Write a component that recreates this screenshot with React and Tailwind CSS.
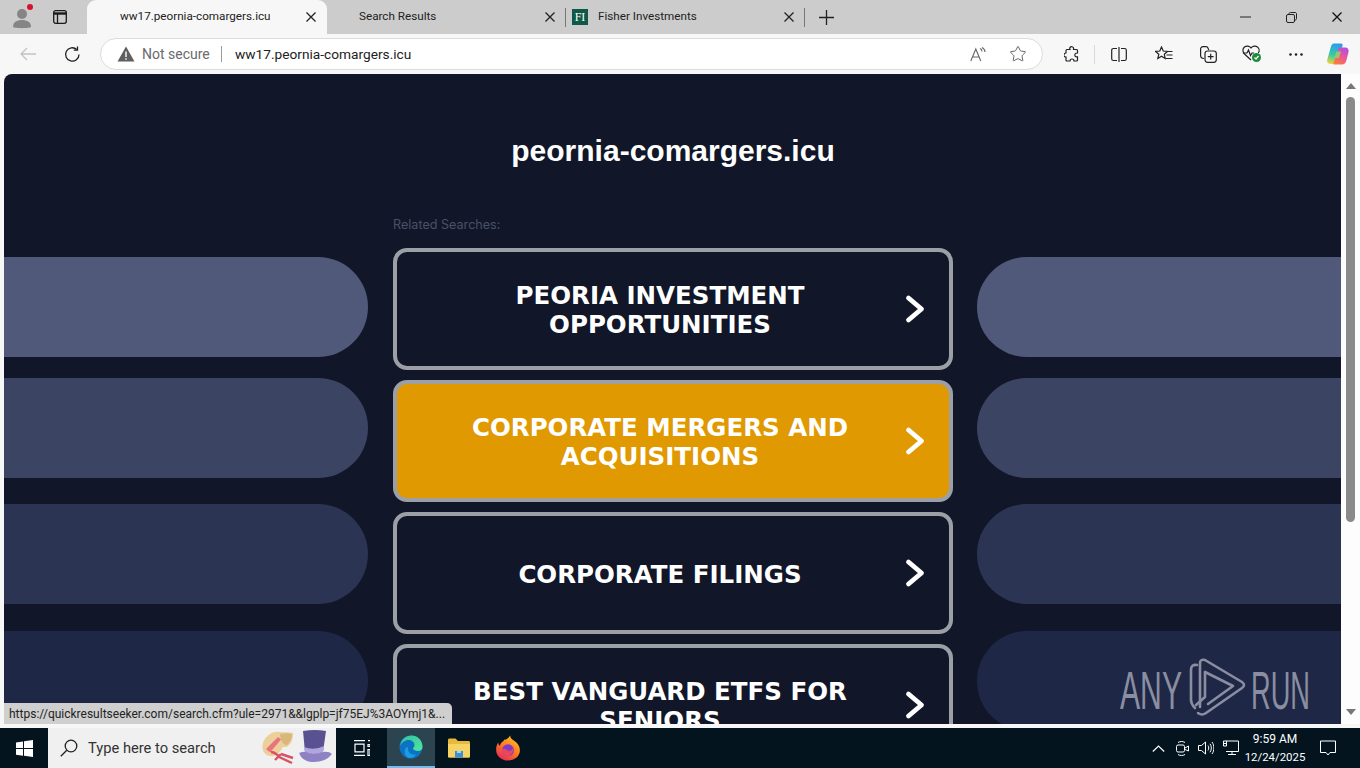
import { Star } from 'lucide-react';

const uiFont = "font-['Roboto','Noto_Sans',sans-serif]";

const buttons = [
  { label: 'PEORIA INVESTMENT OPPORTUNITIES', active: false },
  { label: 'CORPORATE MERGERS AND ACQUISITIONS', active: true },
  { label: 'CORPORATE FILINGS', active: false },
  { label: 'BEST VANGUARD ETFS FOR SENIORS', active: false },
];

function CloseIcon({ size = 12, color = '#222' }) {
  return (
    <svg width={size} height={size} viewBox="0 0 12 12" fill="none" stroke={color} strokeWidth="1.3">
      <path d="M1.5 1.5l9 9M10.5 1.5l-9 9" />
    </svg>
  );
}

function Tab({ title, active, favicon, width, textPad }) {
  return (
    <div
      className={
        active
          ? 'flex items-center h-[34px] bg-[#f7f7f7] rounded-t-[9px] shrink-0'
          : 'flex items-center h-[34px] shrink-0'
      }
      style={{ width }}
    >
      {favicon}
      <span className="text-[11.700px] text-[#222] whitespace-nowrap" style={{ marginLeft: textPad }}>
        {title}
      </span>
      <span className={active ? 'ml-auto mr-[10px] flex' : 'ml-auto mr-[9px] flex'}>
        <CloseIcon />
      </span>
    </div>
  );
}

function ChevronBtn() {
  return (
    <svg width="24" height="32" viewBox="0 0 24 32" fill="none" stroke="#fff" strokeWidth="4.8" strokeLinecap="round" strokeLinejoin="round" className="shrink-0">
      <path d="M5.500 5l13 11-13 11" />
    </svg>
  );
}

function SideColumn({ side }) {
  const shape = side === 'left' ? 'rounded-r-[50px]' : 'rounded-l-[50px] -ml-px';
  return (
    <div className="flex flex-col pt-[183px]">
      <div className={`h-[100px] bg-[#50597a] ${shape}`} />
      <div className={`h-[100px] mt-[21px] bg-[#3c4463] ${shape}`} />
      <div className={`h-[100px] mt-[26px] bg-[#2c3453] ${shape}`} />
      <div className={`h-[100px] mt-[27px] bg-[#1f2747] ${shape}`} />
    </div>
  );
}

function CopilotIcon() {
  return (
    <svg width="24" height="24" viewBox="0 0 24 24">
      <defs>
        <linearGradient id="cpa" x1="0.5" y1="0" x2="0.3" y2="1">
          <stop offset="0" stopColor="#2a9df0" />
          <stop offset="0.55" stopColor="#35c9a5" />
          <stop offset="1" stopColor="#f4d23c" />
        </linearGradient>
        <linearGradient id="cpb" x1="0.8" y1="0" x2="0.2" y2="1">
          <stop offset="0" stopColor="#b04de6" />
          <stop offset="0.55" stopColor="#ef5a8e" />
          <stop offset="1" stopColor="#f9822e" />
        </linearGradient>
      </defs>
      <path d="M8 1.500h7c1.500 0 2 1 1.500 2.200L11 20c-.5 1.400-1.400 2-2.800 2H4.500C2 22 .6 20 1.300 17.600L4.500 6c.7-3 1.800-4.500 3.500-4.500z" fill="url(#cpa)" />
      <path d="M13.500 5.500h5.500c2.800 0 4 2 3.500 4.500L20.500 18c-.6 2.500-2 4.500-4.500 4.500H8.500c-1.200 0-1.300-1-.9-1.800L12 8c.3-1.300.6-2.500 1.500-2.500z" fill="url(#cpb)" />
      <path d="M10.500 9.500h4.500l-2 6.500H8.300z" fill="#8fd86a" opacity="0.8" />
    </svg>
  );
}

function EdgeIcon() {
  return (
    <svg width="24" height="24" viewBox="0 0 24 24">
      <defs>
        <linearGradient id="edgea" x1="0" y1="0" x2="1" y2="1">
          <stop offset="0" stopColor="#35c1a0" />
          <stop offset="1" stopColor="#50e6a0" />
        </linearGradient>
      </defs>
      <circle cx="12" cy="12" r="11.500" fill="#0c72c4" />
      <path d="M1 11C2 4.500 7 .5 12.500.5 18.500.5 23.500 5 23.500 12c0 2.500-2 4-4.500 4-2.500 0-5-1-5-2.500 0-1 1.500-1.500 1.500-3.500 0-3-3-5-6-5C6 5 2.500 7.500 1 11z" fill="url(#edgea)" />
      <path d="M9 14c0 3.500 3.500 6.500 8 5.500-1.500 2.500-4 4-6.500 3.500C6.500 22.500 5 18 6 14.500 6.800 12 9 10.500 9 14z" fill="#1b9de2" />
    </svg>
  );
}

function FolderIcon() {
  return (
    <svg width="24" height="22" viewBox="0 0 24 22">
      <path d="M1 3c0-1 .6-1.600 1.500-1.600h6L11 4h10.500c1 0 1.500.6 1.500 1.500V19c0 1-.6 1.600-1.500 1.600h-19C1.600 20.600 1 20 1 19z" fill="#e8b93a" />
      <path d="M1 7h22v12c0 1-.6 1.600-1.500 1.600h-19C1.600 20.600 1 20 1 19z" fill="#f6d365" />
      <rect x="8" y="14" width="8" height="6.600" fill="#3d8fd1" />
      <rect x="10" y="14" width="4" height="2" fill="#a6d3f2" />
    </svg>
  );
}

function FirefoxIcon() {
  return (
    <svg width="26" height="26" viewBox="0 0 24 24">
      <defs>
        <linearGradient id="ffa" x1="0.8" y1="0" x2="0.2" y2="1">
          <stop offset="0" stopColor="#ffc329" />
          <stop offset="0.5" stopColor="#ff7a1f" />
          <stop offset="1" stopColor="#e6245e" />
        </linearGradient>
      </defs>
      <path d="M14 .5c0 2.500 1.500 3.500 4 5 3 2 5 5 5 8.500 0 5.500-5 9.500-11 9.500S1 19.500 1 13.500c0-3 1-5 2-6.500 0 1.500.5 2.500 1.500 3C5 7 8 6 9 4c.7 1 3-.5 5-3.500z" fill="url(#ffa)" />
      <circle cx="12" cy="14" r="5.500" fill="#7b3bc9" />
      <path d="M6.500 13c2-1 4 0 5 1s4 1 5-2c1 3-1 7.500-5 7.500-3 0-5.500-3-5-6.500z" fill="#e8475f" />
    </svg>
  );
}

function SearchStickers() {
  return (
    <svg width="76" height="36" viewBox="0 0 76 36">
      <path d="M4 13C7 5 14 1 20 2c5 .5 9 0 14 1 0 5-1 10-5 13-2 2-5 0-6 2-2 5-7 9-12 8-6-1-9-7-7-13z" fill="#eccf9a" />
      <path d="M21 4c4-1 8-1 12 0 0 4-2 9-5 11-3 1-7-5-7-11z" fill="#d9b67a" />
      <path d="M7 19l12-12 3 2.500-11 13z" fill="#e8747c" />
      <path d="M12 22c4 0 6 3 9 5M18 26l15 7M22 24l12 4M16 30l6-6" stroke="#d94f63" strokeWidth="2.400" fill="none" />
      <path d="M44 1Q56-1 67 1L64 22Q54 26 46 22Z" fill="#5a5290" />
      <path d="M45 17Q55 21 65 16L64 22Q54 26 46 22Z" fill="#b0a5de" />
      <path d="M40 23Q45 21 47 22 54 26 64 22 70 21 73 24 66 33 52 32 43 31 40 23Z" fill="#8e82c4" />
    </svg>
  );
}

function TaskbarSlot({ width, active, children }) {
  return (
    <div
      className={
        active
          ? 'flex items-center justify-center h-10 bg-[#2c4350] border-b-2 border-[#76b9ed] shrink-0'
          : 'flex items-center justify-center h-10 shrink-0'
      }
      style={{ width }}
    >
      {children}
    </div>
  );
}

function ToolbarIcon({ width, children }) {
  return (
    <div className="flex items-center justify-center shrink-0" style={{ width }}>
      {children}
    </div>
  );
}

export default function App() {
  return (
    <div className={`w-[1360px] h-[768px] flex flex-col overflow-hidden bg-[#f7f7f7] ${uiFont}`}>
      {/* tab strip */}
      <div className="h-[34px] bg-[#cccccc] flex items-center shrink-0">
        <div className="relative w-[44px] pl-[12px] flex items-center shrink-0">
          <svg width="22" height="24" viewBox="0 0 22 24" fill="#858585">
            <circle cx="10" cy="9" r="5" />
            <path d="M1 22c0-5 4-7 9-7s9 2 9 7c-2 1.500-16 1.500-18 0z" />
          </svg>
          <span className="absolute left-[27px] top-[-1px] w-[6px] h-[6px] rounded-full bg-[#d9112a]" />
        </div>
        <div className="w-[43px] flex items-center justify-start pl-[9px] shrink-0">
          <svg width="14" height="14" viewBox="0 0 14 14" fill="none" stroke="#1a1a1a" strokeWidth="1.300">
            <rect x=".7" y=".7" width="12.600" height="12.600" rx="2" />
            <path d="M.7 3.500h12.600" strokeWidth="2.400" />
            <path d="M4.500 3.500v9.800" />
          </svg>
        </div>
        <Tab title="ww17.peornia-comargers.icu" active width={240} textPad={33} />
        <Tab title="Search Results" width={238} textPad={32} />
        <div className="w-px h-[19px] bg-[#777] shrink-0" />
        <Tab
          title="Fisher Investments"
          width={238}
          textPad={10}
          favicon={
            <span className="ml-[6px] w-4 h-4 bg-[#0f5a46] flex items-center justify-center text-white text-[12px] leading-none font-['Liberation_Serif',serif] shrink-0">
              FI
            </span>
          }
        />
        <div className="w-px h-[19px] bg-[#777] shrink-0" />
        <div className="ml-[14px] flex shrink-0">
          <svg width="15" height="15" viewBox="0 0 15 15" stroke="#222" strokeWidth="1.300">
            <path d="M7.500 0v15M0 7.500h15" />
          </svg>
        </div>
        <div className="ml-auto flex items-center shrink-0">
          <div className="w-[46px] flex justify-center">
            <svg width="11" height="2" viewBox="0 0 11 2" stroke="#222"><path d="M0 1h11" /></svg>
          </div>
          <div className="w-[46px] flex justify-center">
            <svg width="11" height="11" viewBox="0 0 11 11" fill="none" stroke="#222">
              <rect x=".5" y="2.500" width="8" height="8" rx="1.500" />
              <path d="M3 2.500V2c0-1 .6-1.500 1.500-1.500H9c1 0 1.500.6 1.500 1.500v4.500c0 1-.5 1.500-1.500 1.500" />
            </svg>
          </div>
          <div className="w-[46px] flex justify-center">
            <CloseIcon size={12} color="#111" />
          </div>
        </div>
      </div>

      {/* toolbar */}
      <div className="h-[40px] bg-[#f7f7f7] flex items-center shrink-0">
        <ToolbarIcon width={56}>
          <svg width="16" height="14" viewBox="0 0 16 14" fill="none" stroke="#c4c4c4" strokeWidth="1.300">
            <path d="M16 7H1M7 1L1 7l6 6" />
          </svg>
        </ToolbarIcon>
        <ToolbarIcon width={32}>
          <svg width="17" height="17" viewBox="0 0 17 17" fill="none" stroke="#222" strokeWidth="1.300">
            <path d="M15 8.500A6.700 6.700 0 1 1 12.800 3.500" />
            <path d="M13.500 .5v3.700H9.800" />
          </svg>
        </ToolbarIcon>
        <div className="ml-[12px] w-[943px] h-[32px] bg-white border border-[#dcdcdc] rounded-full flex items-center shrink-0">
          <svg className="ml-[16px] shrink-0" width="18" height="16" viewBox="0 0 18 16">
            <path d="M9 .5L17.500 15.500H.5z" fill="#5f5f5f" />
            <path d="M9 5.500v5.500M9 12.300v1.500" stroke="#fff" strokeWidth="1.400" />
          </svg>
          <span className="ml-[7px] w-[67px] text-[14px] text-[#6a6a6a] whitespace-nowrap">Not secure</span>
          <span className="ml-[12px] w-px h-[16px] bg-[#9a9a9a]" />
          <span className="ml-[13px] text-[13.700px] text-[#222] whitespace-nowrap">ww17.peornia-comargers.icu</span>
          <div className="ml-auto mr-[15px] flex items-center gap-[23px]">
            <svg width="16" height="15" viewBox="0 0 16 15" fill="none" stroke="#666" strokeWidth="1.100">
              <path d="M.8 14L5.800 2l5 12M2.500 10h6.500" />
              <path d="M10 1.500c1.500.6 2 1.600 2 3M12 .5c1.800 1 3 2.500 3 4.500" />
            </svg>
            <Star size={18} strokeWidth={1.200} color="#555" />
          </div>
        </div>
        <ToolbarIcon width={46} />
        <div className="ml-[-34px] flex items-center shrink-0">
          <ToolbarIcon width={34}>
            <svg width="16" height="16" viewBox="0 0 16 16" fill="none" stroke="#222" strokeWidth="1.200">
              <path d="M6 1.500c1-1.200 3-1 3.500.5.200.6 0 1.200 0 1.500h3c.6 0 1 .4 1 1v2.500c-.4 0-1 0-1.500.2-1.800.8-1.500 3.300.3 3.600h1.200V14c0 .6-.4 1-1 1h-2.500c0-1-.6-2-2-2s-2 1-2 2H3c-.6 0-1-.4-1-1v-3c-1.800 0-2.500-1-2-2.500C.3 7.500 1 7 2 7V4.500c0-.6.400-1 1-1h3c-.3-.6-.4-1.300 0-2z" />
            </svg>
          </ToolbarIcon>
          <span className="ml-[5px] w-px h-[19px] bg-[#d8d8d8]" />
          <ToolbarIcon width={47}>
            <svg width="16" height="15" viewBox="0 0 16 15" fill="none" stroke="#222" strokeWidth="1.200">
              <path d="M8 0v15M6 1.500H2.500c-1 0-1.800.8-1.800 1.800v8.400c0 1 .8 1.800 1.800 1.800H6M10 1.500h3.500c1 0 1.800.8 1.800 1.800v8.400c0 1-.8 1.800-1.800 1.800H10" />
            </svg>
          </ToolbarIcon>
          <ToolbarIcon width={44}>
            <svg width="18" height="16" viewBox="0 0 18 16" fill="none" stroke="#222" strokeWidth="1.200">
              <path d="M6.500 1L8.300 5l4.200.4-3.200 2.900.9 4.200-3.700-2.200L2.800 12.500l1-4.200L.6 5.400 4.800 5z" />
              <path d="M12 5.500h5.500M11.500 9h6M11 12.500h6.500" />
            </svg>
          </ToolbarIcon>
          <ToolbarIcon width={44}>
            <svg width="17" height="17" viewBox="0 0 17 17" fill="none" stroke="#222" strokeWidth="1.200">
              <path d="M4 12.500c-2 0-3.400-1-3.400-3V3c0-1.300 1-2.300 2.300-2.300h3c1 0 2 .8 2.300 1.800L8.800 4" />
              <rect x="5" y="5" width="11.300" height="11.300" rx="2.500" />
              <path d="M10.700 7.800v5.800M7.800 10.700h5.800" />
            </svg>
          </ToolbarIcon>
          <ToolbarIcon width={44}>
            <svg width="20" height="18" viewBox="0 0 20 18" fill="none" stroke="#222" strokeWidth="1.200">
              <path d="M9 15L2.500 9C.3 6.800.5 3.500 2.500 2 4.500.5 7.500.8 9 3c1.500-2.200 4.500-2.500 6.500-1 1.800 1.400 2.200 4 .8 6" />
              <path d="M1.500 8h3.500l1.500-3 2 5.500 1.500-2.500h2" />
              <circle cx="14.500" cy="12.500" r="4.500" fill="#1f8a3a" stroke="none" />
              <path d="M12.500 12.500l1.500 1.500 2.500-3" stroke="#fff" />
            </svg>
          </ToolbarIcon>
          <ToolbarIcon width={44}>
            <svg width="14" height="3" viewBox="0 0 14 3" fill="#222">
              <circle cx="1.500" cy="1.500" r="1.300" />
              <circle cx="7" cy="1.500" r="1.300" />
              <circle cx="12.500" cy="1.500" r="1.300" />
            </svg>
          </ToolbarIcon>
          <ToolbarIcon width={40}>
            <CopilotIcon />
          </ToolbarIcon>
        </div>
      </div>

      {/* page */}
      <div className="relative h-[650px] flex shrink-0 pl-[4px]">
        <div className="w-[1337px] h-full bg-[#111729] rounded-tl-[8px] overflow-hidden grid grid-cols-[364px_560px_1fr] gap-x-[25px] shrink-0">
          <SideColumn side="left" />
          <div className="flex flex-col">
            <h1 className="mt-[56px] h-[42px] text-[30px] leading-[42px] font-bold text-white text-center font-['Liberation_Sans',sans-serif]">
              peornia-comargers.icu
            </h1>
            <p className="mt-[44px] h-[18px] text-[12.600px] leading-[18px] text-[#4a5166] font-['Inter',sans-serif]">
              Related Searches:
            </p>
            <div className="mt-[14px] flex flex-col gap-[10px]">
              {buttons.map((b) => (
                <div
                  key={b.label}
                  className={
                    b.active
                      ? 'h-[122px] shrink-0 flex items-center pl-[20px] pr-[22px] rounded-[14px] border-4 border-[#9ca0a6] bg-[#e09900]'
                      : 'h-[122px] shrink-0 flex items-center pl-[20px] pr-[22px] rounded-[14px] border-4 border-[#9ca0a6]'
                  }
                >
                  <span className="flex-1 pt-[2px] text-center text-white text-[24.500px] leading-[29px] font-bold font-['DejaVu_Sans',sans-serif]">
                    {b.label}
                  </span>
                  <ChevronBtn />
                </div>
              ))}
            </div>
          </div>
          <SideColumn side="right" />
        </div>
        {/* scrollbar */}
        <div className="w-[19px] h-full bg-[#fdfdfd] flex flex-col items-center shrink-0">
          <span className="mt-[9px] w-0 h-0 border-x-[5px] border-x-transparent border-b-[6px] border-b-[#777]" />
          <span className="mt-[8px] w-[9px] h-[425px] rounded-full bg-[#8a8a8a]" />
          <span className="mt-auto mb-[9px] w-0 h-0 border-x-[5px] border-x-transparent border-t-[6px] border-t-[#777]" />
        </div>

        {/* link preview bubble */}
        <div className="absolute left-[4px] bottom-0 w-[448px] h-[21px] pl-[5px] bg-[#cfcfcf] rounded-tr-[5px] flex items-center text-[12px] text-[#222] whitespace-nowrap overflow-hidden">
          https://quickresultseeker.com/search.cfm?ule=2971&amp;&amp;lgplp=jf75EJ%3AOYmj1&amp;...
        </div>

        {/* watermark */}
        <svg className="absolute left-[1118px] bottom-[3px]" width="194" height="64" viewBox="0 0 194 64" fill="none">
          <text x="2" y="52" fontSize="54" fontFamily="Liberation Sans" fill="#8a8ea0" textLength="62" lengthAdjust="spacingAndGlyphs">ANY</text>
          <g stroke="#8a8ea0" strokeWidth="2.600" strokeLinecap="round" strokeLinejoin="round">
            <path d="M79 8Q73 7 73 13V43Q73 47 77 51" />
            <path d="M82 50V6Q82 2 87 3L124 25Q128 28 124 31L88 56Q84 59 80 56" />
            <path d="M87 15V40L78 48" />
            <path d="M87 15L115 29 90 47" />
          </g>
          <text x="133" y="52" fontSize="54" fontFamily="Liberation Sans" fill="#8a8ea0" textLength="59" lengthAdjust="spacingAndGlyphs">RUN</text>
        </svg>
      </div>

      <div className="h-[4px] bg-[#f7f7f7] shrink-0" />

      {/* taskbar */}
      <div className="h-[40px] bg-[#03141f] flex items-center shrink-0">
        <TaskbarSlot width={48}>
          <svg width="17" height="17" viewBox="0 0 17 17" fill="#fff">
            <path d="M0 2.400l7-1v6.700H0zM8 1.300L17 0v8.100H8zM0 9h7v6.700l-7-1zM8 9h9v8l-9-1.300z" />
          </svg>
        </TaskbarSlot>
        <div className="w-[288px] h-10 bg-[#f0f0f0] flex items-center shrink-0">
          <svg className="ml-[12px] shrink-0" width="18" height="18" viewBox="0 0 18 18" fill="none" stroke="#222" strokeWidth="1.300">
            <circle cx="11" cy="7" r="5.800" />
            <path d="M6.800 11.200L.8 17.200" />
          </svg>
          <span className="ml-[10px] pt-px text-[14.700px] text-[#333] whitespace-nowrap">Type here to search</span>
          <div className="ml-auto mr-[1px] flex">
            <SearchStickers />
          </div>
        </div>
        <TaskbarSlot width={51}>
          <svg width="16" height="16" viewBox="0 0 16 16" fill="none" stroke="#fff" strokeWidth="1.200">
            <path d="M0 .6h11M0 15.400h11M1 4.200h9v7.600H1z" />
            <path d="M14 .6h2M14 4.500h2v2h-2zM14 9.500h2v6h-2z" />
          </svg>
        </TaskbarSlot>
        <TaskbarSlot width={48} active>
          <EdgeIcon />
        </TaskbarSlot>
        <TaskbarSlot width={48}>
          <FolderIcon />
        </TaskbarSlot>
        <TaskbarSlot width={50}>
          <FirefoxIcon />
        </TaskbarSlot>
        <div className="ml-auto flex items-center shrink-0">
          <svg width="13" height="7" viewBox="0 0 13 7" fill="none" stroke="#fff" strokeWidth="1.200">
            <path d="M.8 6.500L6.500 1l5.700 5.500" />
          </svg>
          <svg className="ml-[11px]" width="13" height="15" viewBox="0 0 13 15" fill="none" stroke="#fff" strokeWidth="1">
            <rect x=".5" y="4" width="8" height="7" rx="1.500" />
            <path d="M9 7l3.500-2v5L9 8.500M2 1.500c2-1.300 5-1.300 7 0M2 13.500c2 1.300 5 1.300 7 0" />
          </svg>
          <svg className="ml-[9px]" width="16" height="14" viewBox="0 0 16 14" fill="none" stroke="#fff" strokeWidth="1">
            <path d="M.5 4.500h3L7.500 1v12l-4-3.500h-3zM10 4.500c1 1.500 1 3.500 0 5M12 2.800c1.800 2.500 1.800 6 0 8.500M14 1c2.500 3.500 2.500 8.500 0 12" />
          </svg>
          <svg className="ml-[9px]" width="16" height="16" viewBox="0 0 16 16" fill="none" stroke="#fff" strokeWidth="1">
            <path d="M3 1h12.500v10.500H3M9 11.500V14M5 14.500h8M.5 1h3v5h-3zM.5 3.500h3" />
          </svg>
          <div className="ml-[4px] w-[64px] flex flex-col items-center text-white text-[12px] leading-[18px] whitespace-nowrap">
            <span>9:59 AM</span>
            <span className="text-[11.400px]">12/24/2025</span>
          </div>
          <div className="ml-[13px] mr-[24px]">
            <svg width="16" height="16" viewBox="0 0 16 16" fill="none" stroke="#fff" strokeWidth="1">
              <path d="M.5 1h15v11.500H10L8 15l-2-2.500H.5z" />
            </svg>
          </div>
        </div>
      </div>
    </div>
  );
}
